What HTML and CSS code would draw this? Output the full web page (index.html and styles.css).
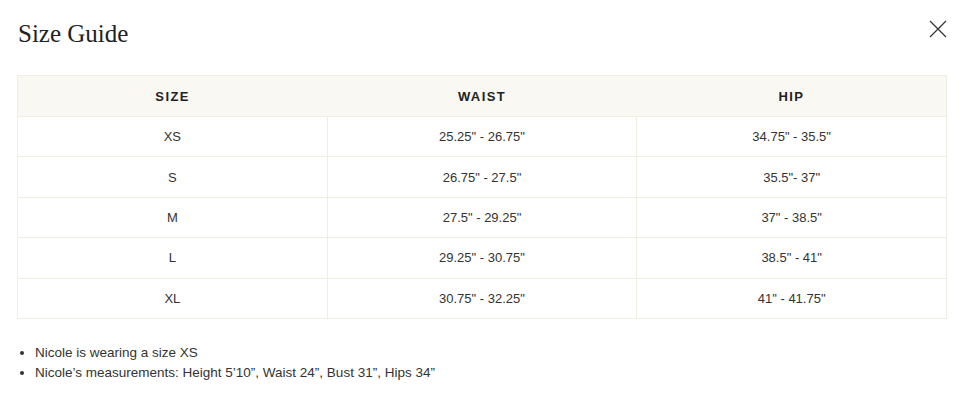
FILE: index.html
```html
<!DOCTYPE html>
<html>
<head>
<meta charset="utf-8">
<link rel="stylesheet" href="styles.css">
</head>
<body>
<div class="modal">
  <div class="modal-head">
    <h2 class="title">Size Guide</h2>
    <button class="close" aria-label="Close">
      <svg width="18" height="18" viewBox="0 0 18 18"><path d="M1 1L17 17M17 1L1 17" stroke="#333" stroke-width="1.2" fill="none"/></svg>
    </button>
  </div>
  <table class="sizes">
    <thead>
      <tr><th>SIZE</th><th>WAIST</th><th>HIP</th></tr>
    </thead>
    <tbody>
      <tr><td>XS</td><td>25.25" - 26.75"</td><td>34.75" - 35.5"</td></tr>
      <tr><td>S</td><td>26.75" - 27.5"</td><td>35.5"- 37"</td></tr>
      <tr><td>M</td><td>27.5" - 29.25"</td><td>37" - 38.5"</td></tr>
      <tr><td>L</td><td>29.25" - 30.75"</td><td>38.5" - 41"</td></tr>
      <tr><td>XL</td><td>30.75" - 32.25"</td><td>41" - 41.75"</td></tr>
    </tbody>
  </table>
  <ul class="notes">
    <li>Nicole is wearing a size XS</li>
    <li>Nicole’s measurements: Height 5’10”, Waist 24”, Bust 31”, Hips 34”</li>
  </ul>
</div>
</body>
</html>
```
FILE: styles.css
```css
html, body {
  margin: 0;
  padding: 0;
  background: #ffffff;
}
.modal {
  padding: 18px 13px 0 17px;
  font-family: "Liberation Sans", Arial, sans-serif;
  color: #333333;
}
.modal-head {
  display: flex;
  justify-content: space-between;
  align-items: flex-start;
  height: 57px;
}
.title {
  margin: 0;
  padding-left: 1px;
  font-family: "Liberation Serif", "Times New Roman", serif;
  font-weight: normal;
  font-size: 25px;
  line-height: 32px;
  color: #222222;
}
.close {
  background: none;
  border: 0;
  padding: 0;
  margin-top: 2px;
  width: 18px;
  height: 18px;
  cursor: pointer;
}
.close svg { display: block; }
.sizes {
  width: 930px;
  border-collapse: collapse;
  table-layout: fixed;
  border: 1px solid #f0ede2;
  font-size: 13px;
}
.sizes th {
  background: #faf8f3;
  height: 40px;
  padding: 0;
  font-weight: bold;
  letter-spacing: 1.4px;
  color: #222222;
  font-size: 13px;
}
.sizes td {
  height: 39.4px;
  padding: 0;
  text-align: center;
  border: 1px solid #f0ede2;
  color: #333333;
}
.notes {
  margin: 24px 0 0 0;
  padding-left: 18px;
  font-size: 13.5px;
  line-height: 20px;
  color: #333333;
}
.notes li { padding-left: 0; }
```
